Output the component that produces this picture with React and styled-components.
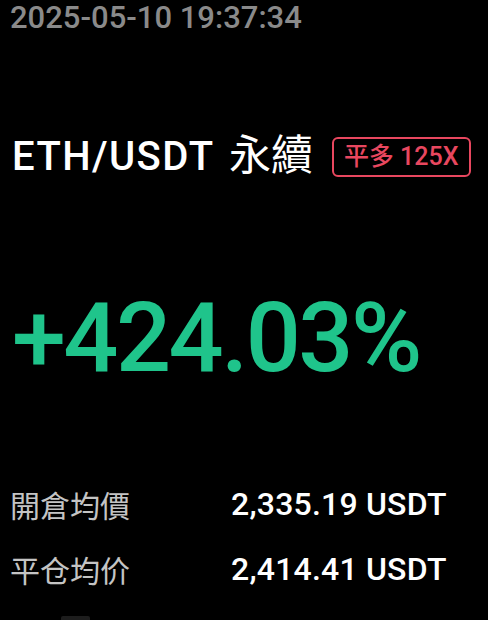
import React from "react";
import styled, { createGlobalStyle } from "styled-components";

const Global = createGlobalStyle`
  html, body { margin: 0; padding: 0; background: #000; }
  body { font-family: Roboto, "Noto Sans CJK TC", sans-serif; }
`;

const Page = styled.div`
  width: 488px;
  height: 620px;
  overflow: hidden;
  background: #000;
  display: flex;
  flex-direction: column;
  padding-left: 10px;
  box-sizing: border-box;
`;

const Stamp = styled.div`
  font-size: 31px;
  line-height: 34px;
  font-weight: 500;
  color: #8a8a8a;
  letter-spacing: 0;
  padding-top: 1px;
`;

const TitleRow = styled.div`
  display: flex;
  align-items: center;
  gap: 19px;
  margin-top: 98px;
  padding-left: 2px;
`;

const Title = styled.div`
  font-size: 40px;
  line-height: 46px;
  font-weight: 500;
  letter-spacing: 1.4px;
  color: #fff;
  font-family: Roboto, "Noto Sans CJK TC", sans-serif;
  white-space: nowrap;
`;

const Suffix = styled.span`
  margin-left: 4px;
  font-size: 42px;
  letter-spacing: 0;
  font-weight: 400;
`;

const Badge = styled.div`
  border: 2px solid #e8475f;
  border-radius: 6px;
  color: #e8475f;
  font-size: 25px;
  line-height: 26px;
  font-weight: 500;
  padding: 5px 10px;
  white-space: nowrap;
  font-family: Roboto, "Noto Sans CJK TC", sans-serif;
`;

const Percent = styled.div`
  font-size: 97px;
  line-height: 100px;
  font-weight: 500;
  letter-spacing: -2.5px;
  color: #1fc48b;
  margin-top: 108px;
  padding-left: 2px;
`;

const Rows = styled.div`
  display: flex;
  flex-direction: column;
  gap: 25px;
  margin-top: 96px;
`;

const Row = styled.div`
  display: grid;
  grid-template-columns: 221px auto;
  align-items: center;
`;

const Label = styled.div`
  font-size: 30px;
  line-height: 40px;
  color: #c4c4c4;
  font-family: "Noto Sans CJK TC", sans-serif;
`;

const Value = styled.div`
  font-size: 32px;
  line-height: 40px;
  font-weight: 500;
  letter-spacing: 0.2px;
  color: #fff;
`;

/* the top edge of the next block, just peeking in at the bottom */
const Peek = styled.div`
  width: 29px;
  height: 4px;
  margin-top: 27px;
  margin-left: 51px;
  border-radius: 2px 2px 0 0;
  background: #1d1d1d;
`;

const rows = [
  { label: "開倉均價", value: "2,335.19 USDT" },
  { label: "平仓均价", value: "2,414.41 USDT" },
];

export default function App() {
  return (
    <>
      <Global />
      <Page>
        <Stamp>2025-05-10 19:37:34</Stamp>
        <TitleRow>
          <Title>
            ETH/USDT<Suffix> 永續</Suffix>
          </Title>
          <Badge>平多 125X</Badge>
        </TitleRow>
        <Percent>+424.03%</Percent>
        <Rows>
          {rows.map((r) => (
            <Row key={r.label}>
              <Label>{r.label}</Label>
              <Value>{r.value}</Value>
            </Row>
          ))}
        </Rows>
        <Peek />
      </Page>
    </>
  );
}
